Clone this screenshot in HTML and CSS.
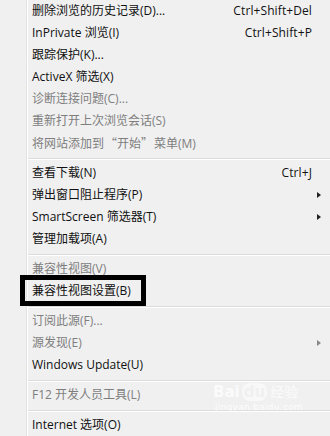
FILE: index.html
```html
<!DOCTYPE html>
<html>
<head>
<meta charset="utf-8">
<link rel="stylesheet" href="styles.css">
</head>
<body>
<div class="menu">
  <div class="item"><span class="label">删除浏览的历史记录(D)...</span><span class="key">Ctrl+Shift+Del</span></div>
  <div class="item"><span class="label">InPrivate 浏览(I)</span><span class="key">Ctrl+Shift+P</span></div>
  <div class="item"><span class="label">跟踪保护(K)...</span></div>
  <div class="item"><span class="label">ActiveX 筛选(X)</span></div>
  <div class="item disabled"><span class="label">诊断连接问题(C)...</span></div>
  <div class="item disabled"><span class="label">重新打开上次浏览会话(S)</span></div>
  <div class="item disabled"><span class="label">将网站添加到<span class="cjk">“开始”</span>菜单(M)</span></div>
  <div class="sep"></div>
  <div class="item"><span class="label">查看下载(N)</span><span class="key">Ctrl+J</span></div>
  <div class="item"><span class="label">弹出窗口阻止程序(P)</span><span class="arrow"></span></div>
  <div class="item"><span class="label">SmartScreen 筛选器(T)</span><span class="arrow"></span></div>
  <div class="item"><span class="label">管理加载项(A)</span></div>
  <div class="sep"></div>
  <div class="item disabled"><span class="label">兼容性视图(V)</span></div>
  <div class="item"><span class="label">兼容性视图设置(B)</span><span class="box"></span></div>
  <div class="sep"></div>
  <div class="item disabled"><span class="label">订阅此源(F)...</span></div>
  <div class="item disabled"><span class="label">源发现(E)</span><span class="arrow"></span></div>
  <div class="item"><span class="label">Windows Update(U)</span></div>
  <div class="sep"></div>
  <div class="item disabled"><span class="label">F12 开发人员工具(L)</span></div>
  <div class="sep"></div>
  <div class="item"><span class="label">Internet 选项(O)</span></div>
  <div class="watermark">
    <div class="wm-logo">Bai<span class="wm-du">du</span><span class="wm-cn">经验</span></div>
    <div class="wm-url">jingyan.baidu.com</div>
  </div>
</div>
</body>
</html>
```
FILE: styles.css
```css
html, body {
  margin: 0;
  padding: 0;
  background: #f0f0f0;
}
body {
  width: 330px;
  height: 436px;
  overflow: hidden;
  font-family: "Open Sans", "Noto Sans CJK SC", sans-serif;
  font-size: 12px;
  color: #111;
}
.menu {
  position: relative;
  width: 330px;
  height: 436px;
  background: #f0f0f0;
  display: flex;
  flex-direction: column;
}
.menu::before {
  content: "";
  position: absolute;
  left: 26px;
  top: 0;
  bottom: 0;
  width: 1px;
  background: #e2e3e3;
  box-shadow: 1px 0 0 #ffffff;
}
.item {
  position: relative;
  height: 22px;
  flex: 0 0 22px;
  display: flex;
  align-items: center;
  padding-left: 32px;
  padding-right: 18px;
  line-height: 22px;
}
.label {
  flex: 1;
  white-space: nowrap;
}
.cjk {
  font-family: "Noto Sans CJK SC", sans-serif;
  margin: 0 1px;
}
.key {
  white-space: nowrap;
  letter-spacing: 0.1px;
}
.disabled {
  color: #7e7e7e;
}
.arrow {
  position: absolute;
  right: 9px;
  top: 8px;
  width: 0;
  height: 0;
  border-top: 3.5px solid transparent;
  border-bottom: 3.5px solid transparent;
  border-left: 4px solid #222;
}
.disabled .arrow {
  border-left-color: #888;
}
.sep {
  flex: 0 0 8px;
  height: 8px;
  margin-left: 28px;
  display: flex;
  align-items: center;
}
.sep::after {
  content: "";
  display: block;
  width: 100%;
  height: 1px;
  background: #dcdcdc;
  box-shadow: 0 1px 0 #ffffff;
}
.box {
  position: absolute;
  left: 20px;
  top: -5px;
  width: 126px;
  height: 31px;
  border: 5px solid #000;
  box-sizing: border-box;
}
.watermark {
  position: absolute;
  left: 213px;
  top: 382px;
  color: rgba(255, 255, 255, 0.75);
  font-family: "DejaVu Sans", sans-serif;
}
.wm-logo {
  font-size: 15px;
  font-weight: bold;
  line-height: 18px;
  white-space: nowrap;
}
.wm-du {
  display: inline-block;
  margin-left: 2px;
  padding: 0 2px;
  border-radius: 8px;
  background: rgba(255, 255, 255, 0.55);
  color: #f0f0f0;
}
.wm-cn {
  margin-left: 3px;
  font-family: "Noto Sans CJK SC", sans-serif;
  font-weight: normal;
  font-size: 14px;
}
.wm-url {
  font-size: 9px;
  line-height: 12px;
  margin-left: 2px;
  letter-spacing: 0.3px;
  color: rgba(255, 255, 255, 0.9);
}
```
